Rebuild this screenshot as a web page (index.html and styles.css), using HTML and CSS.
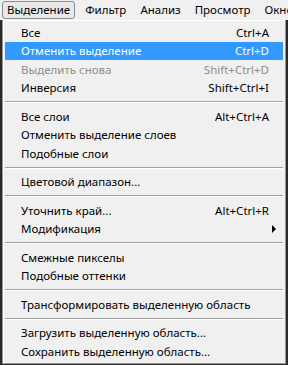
FILE: index.html
```html
<!DOCTYPE html>
<html lang="ru">
  <head>
    <meta charset="UTF-8" />
    <title>Выделение</title>
    <link rel="stylesheet" href="styles.css">
  </head>
  <body>
    <nav class="menubar">
      <span class="top-item active">Выделение</span>
      <span class="top-item">Фильтр</span>
      <span class="top-item">Анализ</span>
      <span class="top-item">Просмотр</span>
      <span class="top-item">Окно</span>
    </nav>

    <div class="menu">
      <div class="item"><span>Все</span><span class="key">Ctrl+A</span></div>
      <div class="item hover"><span>Отменить выделение</span><span class="key">Ctrl+D</span></div>
      <div class="item disabled"><span>Выделить снова</span><span class="key">Shift+Ctrl+D</span></div>
      <div class="item"><span>Инверсия</span><span class="key">Shift+Ctrl+I</span></div>
      <div class="sep"></div>
      <div class="item"><span>Все слои</span><span class="key">Alt+Ctrl+A</span></div>
      <div class="item"><span>Отменить выделение слоев</span></div>
      <div class="item"><span>Подобные слои</span></div>
      <div class="sep"></div>
      <div class="item"><span>Цветовой диапазон...</span></div>
      <div class="sep"></div>
      <div class="item"><span>Уточнить край...</span><span class="key">Alt+Ctrl+R</span></div>
      <div class="item"><span>Модификация</span><span class="arrow"></span></div>
      <div class="sep"></div>
      <div class="item"><span>Смежные пикселы</span></div>
      <div class="item"><span>Подобные оттенки</span></div>
      <div class="sep"></div>
      <div class="item"><span>Трансформировать выделенную область</span></div>
      <div class="sep"></div>
      <div class="item"><span>Загрузить выделенную область...</span></div>
      <div class="item"><span>Сохранить выделенную область...</span></div>
    </div>
  </body>
</html>
```

FILE: styles.css
```css
body {
  margin: 0;
  width: 288px;
  height: 365px;
  overflow: hidden;
  background: #2a2a2a;
  font-family: "Noto Sans", "Open Sans", sans-serif;
  font-size: 11.5px;
  color: #000;
}

.menubar {
  height: 20px;
  background: #f0f0f0;
  display: flex;
  align-items: center;
  padding-left: 2px;
  white-space: nowrap;
  overflow: hidden;
}

.top-item {
  padding: 0 6px;
  line-height: 16px;
  border: 1px solid transparent;
}

.top-item.active {
  border-color: #8c8c8c;
  border-radius: 3px;
  background: #e8e8e8;
  padding: 0 4px;
  margin-right: 3px;
}

.menu {
  margin: 0 2px;
  background: #f0f0f0;
  border: 1px solid #979797;
  border-top: none;
  padding: 3px 2px 2px;
  box-shadow: 1px 1px 0 #fff inset;
}

.item {
  height: 18.5px;
  display: flex;
  align-items: center;
  justify-content: space-between;
  padding: 0 14px 0 16px;
}

.item.hover {
  background: #3399ff;
  color: #fff;
}

.item.disabled {
  color: #8d8d8d;
}

.arrow {
  width: 0;
  height: 0;
  border-top: 4px solid transparent;
  border-bottom: 4px solid transparent;
  border-left: 4px solid #000;
  margin-right: -7px;
}

.sep {
  height: 1px;
  margin: 4px 0;
  background: #a0a0a0;
  border-bottom: 1px solid #fff;
}
```
